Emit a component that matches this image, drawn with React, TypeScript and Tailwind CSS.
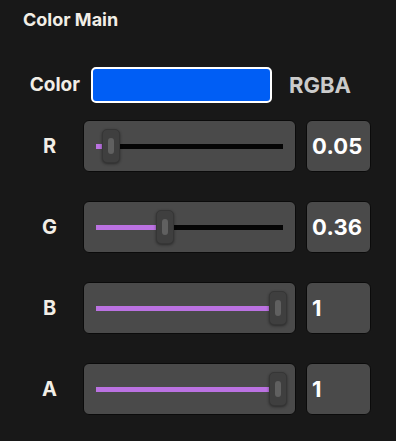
import { useState } from 'react'

type Channel = { key: string; value: number }

const CHANNELS: Channel[] = [
  { key: 'R', value: 0.05 },
  { key: 'G', value: 0.36 },
  { key: 'B', value: 1 },
  { key: 'A', value: 1 },
]

// track geometry, in px
const TRACK_RANGE = 176

const Slider = ({ value }: { value: number }) => {
  const left = value * TRACK_RANGE - 3
  return (
    <div className="flex h-[52px] w-[213px] items-center rounded-[6px] border border-[#0b0b0b] bg-[#4a4a4a] px-[12px]">
      <div className="relative h-[5px] w-full bg-[#050505]">
        <div className="absolute left-0 top-0 h-full bg-[#bb72e2]" style={{ width: Math.max(left, 0) }} />
        <div
          className="absolute top-1/2 flex h-[34px] w-[18px] -translate-y-1/2 items-center justify-center rounded-[5px] border border-[#363636] bg-[#3f3f3f] shadow-[0_1px_3px_rgba(0,0,0,0.45)]"
          style={{ left }}
        >
          <div className="h-[16px] w-[6px] rounded-full bg-[#606060]" />
        </div>
      </div>
    </div>
  )
}

const Row = ({ channel }: { channel: Channel }) => (
  <div className="flex items-center">
    <span className="w-[83px] pl-[16px] text-center text-[20px] font-bold text-[#f2eee6]">{channel.key}</span>
    <Slider value={channel.value} />
    <div className="ml-[10px] flex h-[52px] w-[65px] items-center rounded-[6px] border border-[#0b0b0b] bg-[#4a4a4a] pl-[5px] text-[22px] font-bold tracking-[0.2px] text-white">
      {channel.value}
    </div>
  </div>
)

export default function App() {
  const [channels] = useState(CHANNELS)
  return (
    <div className="h-[441px] w-[396px] bg-[#181818] font-['Inter',sans-serif]">
      <div className="px-[23px] pt-[7px] text-[18px] font-bold leading-[26px] text-[#f2eee6]">Color Main</div>
      <div className="mt-[34px] flex items-center">
        <span className="w-[80px] text-right text-[19px] font-bold text-[#f2eee6]">Color</span>
        <div className="ml-[11px] h-[36px] w-[181px] rounded-[5px] border-2 border-white bg-[#005ef5]" />
        <span className="ml-[17px] text-[22px] font-bold text-[#cbcbcb]">RGBA</span>
      </div>
      <div className="mt-[17px] flex flex-col gap-[29px]">
        {channels.map((c) => (
          <Row key={c.key} channel={c} />
        ))}
      </div>
    </div>
  )
}
